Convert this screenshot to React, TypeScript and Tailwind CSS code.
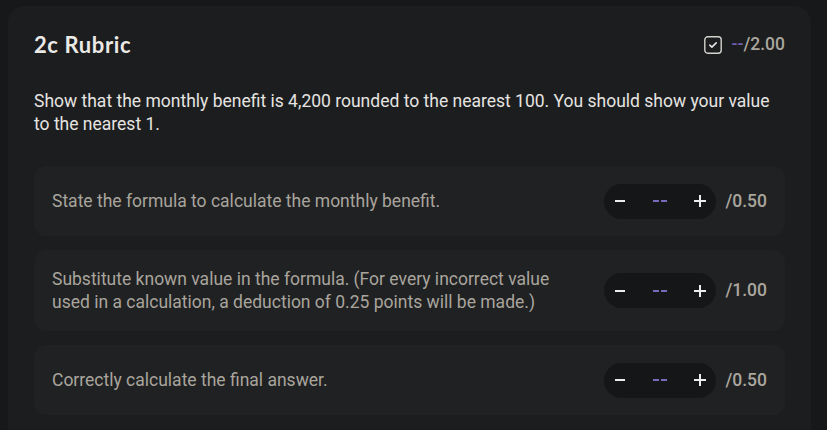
import React from "react";

const rows = [
  { text: "State the formula to calculate the monthly benefit.", max: "/0.50" },
  {
    text: "Substitute known value in the formula. (For every incorrect value used in a calculation, a deduction of 0.25 points will be made.)",
    max: "/1.00",
  },
  { text: "Correctly calculate the final answer.", max: "/0.50" },
];

function Stepper() {
  return (
    <div className="flex h-[35px] w-[112px] items-center justify-between rounded-full bg-[#151617] pl-[11px] pr-[10px]">
      <svg width="10" height="12" viewBox="0 0 10 12">
        <rect x="0" y="5" width="10" height="2" fill="#ececec" />
      </svg>
      <svg width="14" height="4" viewBox="0 0 14 4">
        <rect x="0" y="1" width="6" height="2" fill="#7a68bd" />
        <rect x="8" y="1" width="6" height="2" fill="#7a68bd" />
      </svg>
      <svg width="12" height="12" viewBox="0 0 12 12">
        <rect x="0" y="5" width="12" height="2" fill="#ececec" />
        <rect x="5" y="0" width="2" height="12" fill="#ececec" />
      </svg>
    </div>
  );
}

export default function App() {
  return (
    <div
      className="min-h-[430px] w-full bg-[#17181a] pl-[8px] pr-[16px] pt-[6px]"
      style={{ fontFamily: "Roboto, 'Liberation Sans', sans-serif" }}
    >
      <div className="rounded-t-[16px] bg-[#1c1d1f] px-[26px] pb-[16px] pt-[25px]">
        <div className="flex items-center justify-between">
          <h1
            className="text-[22px] font-bold leading-[28px] tracking-[0.6px] text-[#ebe9e6]"
            style={{ fontFamily: "Lato, 'Open Sans', sans-serif" }}
          >
            2c Rubric
          </h1>
          <div className="flex items-center gap-[10px]">
            <svg width="18" height="18" viewBox="0 0 18 18" fill="none">
              <rect x="0.8" y="0.8" width="16.4" height="16.4" rx="3" stroke="#d4d2ce" strokeWidth="1.4" />
              <path d="M5.8 9.2 L7.9 11.1 L12.2 6.9" stroke="#e8e6e2" strokeWidth="1.6" strokeLinecap="round" strokeLinejoin="round" />
            </svg>
            <span className="text-[17.5px] font-medium leading-none">
              <span className="text-[#6f5fb0]">--</span>
              <span className="text-[#aaa69e]">/2.00</span>
            </span>
          </div>
        </div>
        <p className="mt-[31px] text-[17.5px] leading-[23px] text-[#e6e4e1]">
          Show that the monthly benefit is 4,200 rounded to the nearest 100. You should show your value to the nearest 1.
        </p>
        <div className="mt-[30px] flex flex-col gap-[14px]">
          {rows.map((r, i) => (
            <div
              key={i}
              className="flex items-center justify-between gap-[40px] rounded-[12px] bg-[#202123] py-[17.5px] pl-[18px] pr-[18px]"
            >
              <p className="max-w-[520px] text-[17.5px] leading-[23px] text-[#a9a59d]">{r.text}</p>
              <div className="flex shrink-0 items-center gap-[9px]">
                <Stepper />
                <span className="text-[17.5px] font-medium text-[#aaa69e]">{r.max}</span>
              </div>
            </div>
          ))}
        </div>
      </div>
    </div>
  );
}
